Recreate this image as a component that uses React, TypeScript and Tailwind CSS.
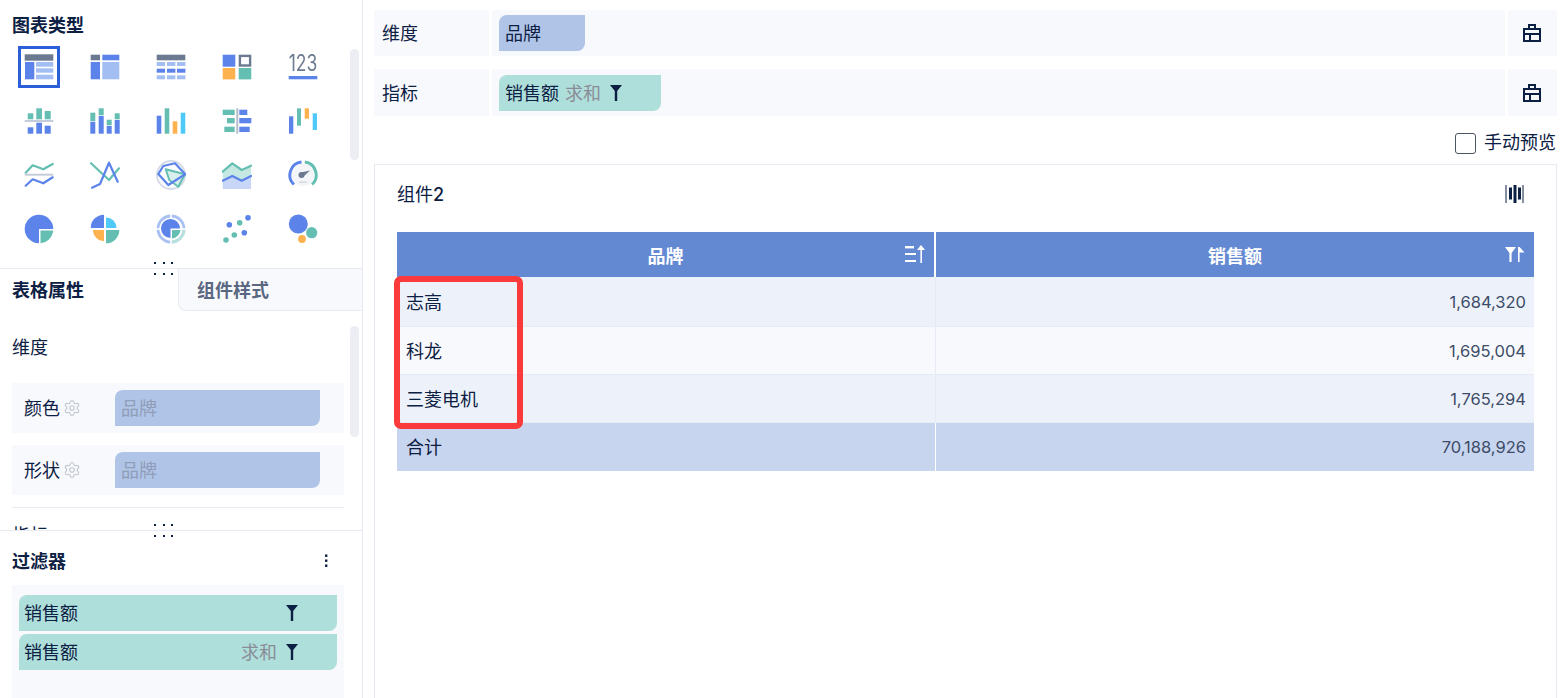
import { Settings } from "lucide-react"
import type { ReactNode } from "react"

const BLUE = "#5b83ea"
const LIGHT = "#a3bef3"
const GRAY = "#6b7a90"
const TEAL = "#64bfb2"
const ORANGE = "#fdb24f"
const CYAN = "#4fc9f7"

function Icon({ children }: { children: ReactNode }) {
  return (
    <svg width="30" height="30" viewBox="0 0 30 30" fill="none" className="blur-[0.3px]">
      {children}
    </svg>
  )
}

const line = { fill: "none", strokeWidth: 2.2, strokeLinecap: "round", strokeLinejoin: "round" } as const

const chartIcons: ReactNode[] = [
  <>
    <rect x="0.7" y="2.3" width="28.6" height="6.4" fill={GRAY} />
    <rect x="1" y="10" width="9.3" height="17.3" fill={BLUE} />
    <rect x="12" y="10" width="17.3" height="4.7" fill={LIGHT} />
    <rect x="12" y="16.3" width="17.3" height="4.4" fill={LIGHT} />
    <rect x="12" y="22.7" width="17.3" height="4.6" fill={LIGHT} />
  </>,
  <>
    <rect x="0.7" y="2.7" width="9.3" height="5.6" fill={GRAY} />
    <rect x="12.3" y="2.7" width="17" height="5.6" fill={BLUE} />
    <rect x="0.7" y="10" width="9.3" height="17.3" fill={BLUE} />
    <rect x="12.3" y="10" width="17" height="17.3" fill={LIGHT} />
  </>,
  <>
    <rect x="0.7" y="2.7" width="28.6" height="5.6" fill={GRAY} />
    {[10, 16.7, 23.3].map((y, r) =>
      [0.7, 11, 21].map((x) => (
        <rect key={`${x}-${y}`} x={x} y={y} width="8.4" height="4" fill={r === 1 ? BLUE : LIGHT} />
      )),
    )}
  </>,
  <>
    <rect x="0.7" y="2.7" width="12.6" height="12" fill={BLUE} />
    <rect x="17.9" y="3.9" width="10.2" height="9.6" stroke={GRAY} strokeWidth="2.4" />
    <rect x="0.7" y="16" width="12.6" height="11.4" fill={ORANGE} />
    <rect x="16.7" y="16" width="12.6" height="11.4" fill={TEAL} />
  </>,
  <>
    <text x="0.7" y="19.4" fontSize="23" fontFamily="Inter, sans-serif" fontWeight="400" fill={GRAY} textLength="28.6" lengthAdjust="spacingAndGlyphs">
      123
    </text>
    <rect x="0.7" y="24" width="28.6" height="3.3" fill={BLUE} />
  </>,

  <>
    <rect x="3.7" y="7.3" width="5.6" height="6" fill={TEAL} />
    <rect x="12.3" y="2.3" width="5.7" height="11" fill={TEAL} />
    <rect x="20.7" y="5" width="6" height="8.3" fill={TEAL} />
    <rect x="0.7" y="14" width="28.6" height="2" fill="#c5ccd9" />
    <rect x="3.7" y="21.3" width="5.6" height="6.4" fill={BLUE} />
    <rect x="12.3" y="16.7" width="5.7" height="11" fill={BLUE} />
    <rect x="20.7" y="19.7" width="6" height="8" fill={BLUE} />
  </>,
  <>
    <rect x="0.3" y="6.7" width="5" height="8.3" fill={TEAL} />
    <rect x="0.3" y="15.7" width="5" height="12" fill={BLUE} />
    <rect x="8.7" y="2.3" width="5" height="7" fill={TEAL} />
    <rect x="8.7" y="10" width="5" height="17.7" fill={BLUE} />
    <rect x="16.7" y="13.7" width="5" height="5.6" fill={TEAL} />
    <rect x="16.7" y="20" width="5" height="7.7" fill={BLUE} />
    <rect x="24.7" y="7.3" width="5" height="6" fill={TEAL} />
    <rect x="24.7" y="14" width="5" height="13.7" fill={BLUE} />
  </>,
  <>
    <rect x="0.7" y="9.7" width="4.6" height="18" fill={BLUE} />
    <rect x="8.7" y="2.3" width="4.6" height="25.4" fill={TEAL} />
    <rect x="16.7" y="15.3" width="4.6" height="12.4" fill={ORANGE} />
    <rect x="24.7" y="6.7" width="4.6" height="21" fill={CYAN} />
  </>,
  <>
    <rect x="0.7" y="3.7" width="12" height="5.3" fill={TEAL} />
    <rect x="5" y="12" width="7.7" height="5.3" fill={TEAL} />
    <rect x="2.3" y="20.7" width="10.4" height="5.3" fill={TEAL} />
    <rect x="14.3" y="2.3" width="2" height="25.4" fill="#b4bcca" />
    <rect x="17.3" y="3.7" width="8" height="5.3" fill={BLUE} />
    <rect x="17.3" y="12" width="12" height="5.3" fill={BLUE} />
    <rect x="17.3" y="20.7" width="10.4" height="5.3" fill={BLUE} />
  </>,
  <>
    <rect x="1" y="10.3" width="4.3" height="17.4" fill={BLUE} />
    <rect x="9" y="2.3" width="4" height="17.4" fill={TEAL} />
    <rect x="16.7" y="2.3" width="4.3" height="10.4" fill={ORANGE} />
    <rect x="24.7" y="7.3" width="4.3" height="16.7" fill={CYAN} />
  </>,

  <>
    <polyline points="1.7,12.7 8.7,5.3 19.3,9.3 28.7,4" stroke={TEAL} {...line} />
    <rect x="0.7" y="13.7" width="28.6" height="2" fill="#c5ccd9" />
    <polyline points="1.7,25.7 8.7,19.3 19.3,23.3 28.7,17.3" stroke={BLUE} {...line} />
  </>,
  <>
    <polyline points="1,3.3 19,20 29,8.3" stroke={TEAL} {...line} />
    <polyline points="2,27.7 10,24 19,2.7 27.7,21.7" stroke={BLUE} {...line} />
  </>,
  <>
    <circle cx="15" cy="15" r="14" fill="#fbfcfd" stroke="#d5dae8" strokeWidth="1.8" />
    <polygon points="9.7,9.3 29,14.3 22.3,26.7 13.3,20" fill="#d8efec" stroke={TEAL} strokeWidth="2" strokeLinejoin="round" />
    <polygon points="2.3,14 7.3,6 19,3.3 29.2,14.3 12.3,25" stroke={BLUE} {...line} />
  </>,
  <>
    <path d="M0.7 11.7 10.3 3.3 19.7 10 29 5.7V16L19.7 20.7 10.3 16 0.7 20.7Z" fill="#c5e8e2" />
    <path d="M0.7 20.7 10.3 16 19.7 20.7 29 16V29H0.7Z" fill="#c8d7f8" />
    <polyline points="0.7,11.7 10.3,3.3 19.7,10 29,5.7" stroke={TEAL} {...line} />
    <polyline points="0.7,20.7 10.3,16 19.7,20.7 29,16" stroke={BLUE} {...line} />
  </>,
  <>
    <circle cx="15" cy="15" r="11" fill="#f3f5f9" />
    <path d="M6 24.5A13 13 0 0 1 13.5 2.1" stroke={BLUE} strokeWidth="3" fill="none" />
    <path d="M16.8 2.1A13 13 0 0 1 24 24.5" stroke={TEAL} strokeWidth="3" fill="none" />
    <circle cx="13.5" cy="15" r="3" fill={GRAY} />
    <polygon points="13,12.5 22,10.5 15,17" fill={GRAY} />
    <rect x="11" y="21.5" width="8" height="1.5" fill="#d5dae3" />
  </>,

  <>
    <path d="M15 15V29.3A14.3 14.3 0 1 1 29.3 15Z" fill={BLUE} />
    <path d="M16.5 16.5H29.2A14 14 0 0 1 16.5 29.2Z" fill={TEAL} />
  </>,
  <>
    <path d="M14 14H0.7A13.3 13.3 0 0 1 14 0.7Z" fill={BLUE} />
    <path d="M16 14V3.5A10.5 10.5 0 0 1 26.5 14Z" fill={CYAN} />
    <path d="M14 16V27A11 11 0 0 1 3 16Z" fill={ORANGE} />
    <path d="M16 16H29.3A13.3 13.3 0 0 1 16 29.3Z" fill={TEAL} />
  </>,
  <>
    <circle cx="15" cy="15" r="13" stroke="#a9c0f3" strokeWidth="2.8" />
    <path d="M28 15A13 13 0 0 1 15 28" stroke="#b7e2dc" strokeWidth="2.8" fill="none" />
    <path d="M15 0V6M15 24V30M0 15H6M24 15H30" stroke="#fff" strokeWidth="1.6" />
    <path d="M14.5 14.5V24A9.5 9.5 0 1 1 24 14.5Z" fill={BLUE} />
    <path d="M16 16H24.5A9.5 9.5 0 0 1 16 24.5Z" fill={TEAL} />
  </>,
  <>
    <circle cx="7.3" cy="10.7" r="2.8" fill={BLUE} />
    <circle cx="26" cy="3.7" r="2.8" fill={BLUE} />
    <circle cx="22.3" cy="18.7" r="2.8" fill={BLUE} />
    <circle cx="17.7" cy="8.7" r="2.8" fill={TEAL} />
    <circle cx="12.3" cy="21" r="2.8" fill={TEAL} />
    <circle cx="4" cy="26" r="2.8" fill={TEAL} />
  </>,
  <>
    <circle cx="10.3" cy="10" r="9.5" fill={BLUE} />
    <circle cx="23.7" cy="18.7" r="5.6" fill={TEAL} />
    <circle cx="14" cy="25" r="3.9" fill={ORANGE} />
  </>,
]

function Funnel() {
  return (
    <svg width="12" height="16" viewBox="0 0 12 16" className="shrink-0 block">
      <path d="M0 0H12L7.2 6V16H4.8V6Z" fill="#0c2043" />
    </svg>
  )
}

function Handle() {
  return (
    <div className="absolute left-[154px] -top-[7px] grid grid-cols-3 gap-x-[6.5px] gap-y-[9px]">
      {[0, 1, 2, 3, 4, 5].map((i) => (
        <span key={i} className="w-[2px] h-[2px] bg-[#0c2043]" />
      ))}
    </div>
  )
}

function Scrollbar({ top }: { top: string }) {
  return <div className={`absolute left-[350px] w-[9px] h-[111px] rounded-[5px] bg-[#eceef3] ${top}`} />
}

function DisabledField({ label, top }: { label: string; top?: boolean }) {
  return (
    <div className={`flex items-center h-[50px] bg-[#f8f9fd] ${top ? "mt-[12px]" : ""}`}>
      <span className="ml-[12px] pb-[2px] text-[#0c2043]">{label}</span>
      <Settings size={18} strokeWidth={1.5} className="ml-[3px] text-[#c2c7d1]" />
      <div className="ml-[34px] flex items-center w-[205px] h-[36px] px-[6px] pb-[2px] bg-[#afc4e7] rounded-tl-[8px] rounded-br-[8px] text-[#8f9db8]">
        品牌
      </div>
    </div>
  )
}

function FilterChip({ agg, className }: { agg?: boolean; className?: string }) {
  return (
    <div className={`flex items-center h-[36px] pl-[5px] bg-[#afdfda] rounded-tl-[8px] rounded-br-[8px] ${className ?? ""}`}>
      <span className="flex-1 pb-[2px]">销售额</span>
      {agg && <span className="text-[#8a8d98] mr-[9px] pb-[2px]">求和</span>}
      <span className="mr-[39px]">
        <Funnel />
      </span>
    </div>
  )
}

function ShelfRow({ label, className, children }: { label: string; className: string; children: ReactNode }) {
  return (
    <div className={`flex gap-[3px] ${className}`}>
      <div className="w-[115px] flex items-center pl-[8px] pb-[2px] bg-[#f8f9fd]">{label}</div>
      <div className="flex-1 flex items-center px-[7px] bg-[#f8f9fd]">{children}</div>
      <div className="w-[49px] flex items-center justify-center bg-[#f8f9fd]">
        <svg width="18" height="18" viewBox="0 0 18 18" fill="none" stroke="#0c2043" strokeWidth="2" className="ml-[-1px]">
          <path d="M1 5H17V17H1ZM1 10H17M7 10V17M6 5V1H12V5" />
        </svg>
      </div>
    </div>
  )
}

const rows = [
  { name: "志高", value: "1,684,320", bg: "bg-[#edf2fa]", h: "h-[50px]" },
  { name: "科龙", value: "1,695,004", bg: "bg-[#f7f9fd]", h: "h-[48px]" },
  { name: "三菱电机", value: "1,765,294", bg: "bg-[#edf2fa]", h: "h-[48px]" },
]

export default function App() {
  return (
    <div className="flex w-[1566px] h-[698px] overflow-hidden bg-white text-[18px] leading-none text-[#0c2043] font-['Noto_Sans_CJK_SC',sans-serif]">
      <aside className="relative w-[363px] shrink-0 flex flex-col border-r border-[#e8eaf2]">
        <section className="relative h-[268px] shrink-0">
          <h2 className="h-[40px] pl-[12px] pt-[15px] font-bold">图表类型</h2>
          <div className="grid grid-cols-[repeat(5,66px)] auto-rows-[54px] pl-[6px]">
            {chartIcons.map((icon, i) => (
              <div key={i} className="flex items-center justify-center">
                {i === 0 ? (
                  <div className="w-[42px] h-[42px] flex items-center justify-center border-[3px] border-[#2b5fd9]">
                    <Icon>{icon}</Icon>
                  </div>
                ) : (
                  <Icon>{icon}</Icon>
                )}
              </div>
            ))}
          </div>
          <Scrollbar top="top-[49px]" />
        </section>

        <section className="relative h-[262px] shrink-0 border-t border-[#e8eaf2]">
          <Handle />
          <div className="flex h-[42px]">
            <div className="w-[178px] pl-[12px] pb-[2px] flex items-center font-bold">表格属性</div>
            <div className="flex-1 pl-[18px] pb-[2px] flex items-center font-bold text-[#5a6781] bg-[#f8f9fd] border-l border-b border-[#e8eaf2] rounded-bl-[8px]">
              组件样式
            </div>
          </div>
          <div className="w-[344px] pl-[12px] h-[219px] overflow-hidden">
            <div className="h-[72px] flex items-center pb-[3px]">维度</div>
            <DisabledField label="颜色" />
            <DisabledField label="形状" top />
            <div className="mt-[12px] pt-[17px] border-t border-[#e8eaf2]">指标</div>
          </div>
          <Scrollbar top="top-[57px]" />
        </section>

        <section className="relative flex-1 border-t border-[#e8eaf2]">
          <Handle />
          <div className="flex items-center justify-between h-[54px] pl-[12px] pr-[34px] pt-[6px]">
            <h2 className="font-bold pb-[2px]">过滤器</h2>
            <svg width="4" height="14" viewBox="0 0 4 14" fill="#0c2043">
              <rect x="1" y="0.5" width="2.4" height="2.4" />
              <rect x="1" y="5.5" width="2.4" height="2.4" />
              <rect x="1" y="10.5" width="2.4" height="2.4" />
            </svg>
          </div>
          <div className="ml-[12px] w-[332px] h-[121px] px-[7px] pt-[10px] bg-[#f8f9fd]">
            <FilterChip />
            <FilterChip agg className="mt-[3px]" />
          </div>
        </section>
      </aside>

      <main className="flex-1 flex flex-col pl-[11px] pr-[9px] pt-[10px]">
        <ShelfRow label="维度" className="h-[46px]">
          <div className="flex items-center w-[86px] h-[36px] px-[6px] pb-[2px] bg-[#afc4e7] rounded-tl-[8px] rounded-br-[8px]">品牌</div>
        </ShelfRow>
        <ShelfRow label="指标" className="mt-[13px] h-[47px]">
          <div className="flex items-center w-[162px] h-[36px] px-[6px] bg-[#afdfda] rounded-tl-[8px] rounded-br-[8px]">
            <span className="pb-[2px]">销售额</span>
            <span className="ml-[6px] pb-[2px] text-[#8a8d98]">求和</span>
            <span className="ml-[9px]">
              <Funnel />
            </span>
          </div>
        </ShelfRow>

        <label className="h-[48px] flex items-center justify-end gap-[8px] pt-[6px] pr-[1px]">
          <span className="w-[21px] h-[21px] border border-[#4b5563] rounded-[3px]" />
          <span className="pb-[4px]">手动预览</span>
        </label>

        <div className="flex-1 border border-b-0 border-[#e8eaf2] px-[22px]">
          <div className="h-[67px] flex items-center justify-between pb-[10px]">
            <span>
              组件<span className="font-['Inter',sans-serif] font-medium">2</span>
            </span>
            <svg width="20" height="20" viewBox="0 0 20 20" fill="#0c2043" className="mr-[9px]">
              <rect x="0.5" y="1" width="1" height="18" />
              <rect x="4" y="3.5" width="3" height="12" />
              <rect x="8.5" y="1" width="3" height="18" />
              <rect x="13" y="3.5" width="3" height="12" />
              <rect x="17.5" y="1" width="1" height="18" />
            </svg>
          </div>

          <div className="relative">
            <div className="grid grid-cols-[539px_1fr] h-[45px] bg-[#6489d3] text-white font-bold">
              <div className="relative flex items-center justify-center border-r-2 border-white">
                品牌
                <svg width="22" height="20" viewBox="0 0 22 20" fill="#fff" className="absolute right-[8px] top-[12px]">
                  <rect x="1" y="2" width="9" height="2.4" />
                  <rect x="1" y="9" width="11" height="2" />
                  <rect x="1" y="16" width="11" height="2" />
                  <path d="M17 1 21 6H18V19H16.4V6H13Z" />
                </svg>
              </div>
              <div className="relative flex items-center justify-center">
                销售额
                <svg width="20" height="18" viewBox="0 0 20 18" fill="#fff" className="absolute right-[9px] top-[14px]">
                  <path d="M0 1H11L6.6 7V16H4.4V7Z" />
                  <path d="M13 1H14.6L19.5 6.5H14.6V16H13Z" />
                </svg>
              </div>
            </div>
            {rows.map((r) => (
              <div key={r.name} className={`grid grid-cols-[539px_1fr] ${r.h} ${r.bg} border-b border-[#e6ebf5]`}>
                <div className="flex items-center pl-[9px] pb-[2px] border-r border-[#e6ebf5]">{r.name}</div>
                <div className="flex items-center justify-end pr-[8px] pt-[1px] font-['Inter',sans-serif] text-[16.5px] text-[#3d4c68]">{r.value}</div>
              </div>
            ))}
            <div className="grid grid-cols-[539px_1fr] h-[48px] bg-[#c8d5ef]">
              <div className="flex items-center pl-[9px] pb-[2px] border-r border-white">合计</div>
              <div className="flex items-center justify-end pr-[8px] pt-[1px] font-['Inter',sans-serif] text-[16.5px] text-[#3d4c68]">70,188,926</div>
            </div>
            <div className="absolute -left-[3px] top-[44px] w-[129px] h-[153px] border-[6px] border-[#fb3b3b] rounded-[7px]" />
          </div>
        </div>
      </main>
    </div>
  )
}
